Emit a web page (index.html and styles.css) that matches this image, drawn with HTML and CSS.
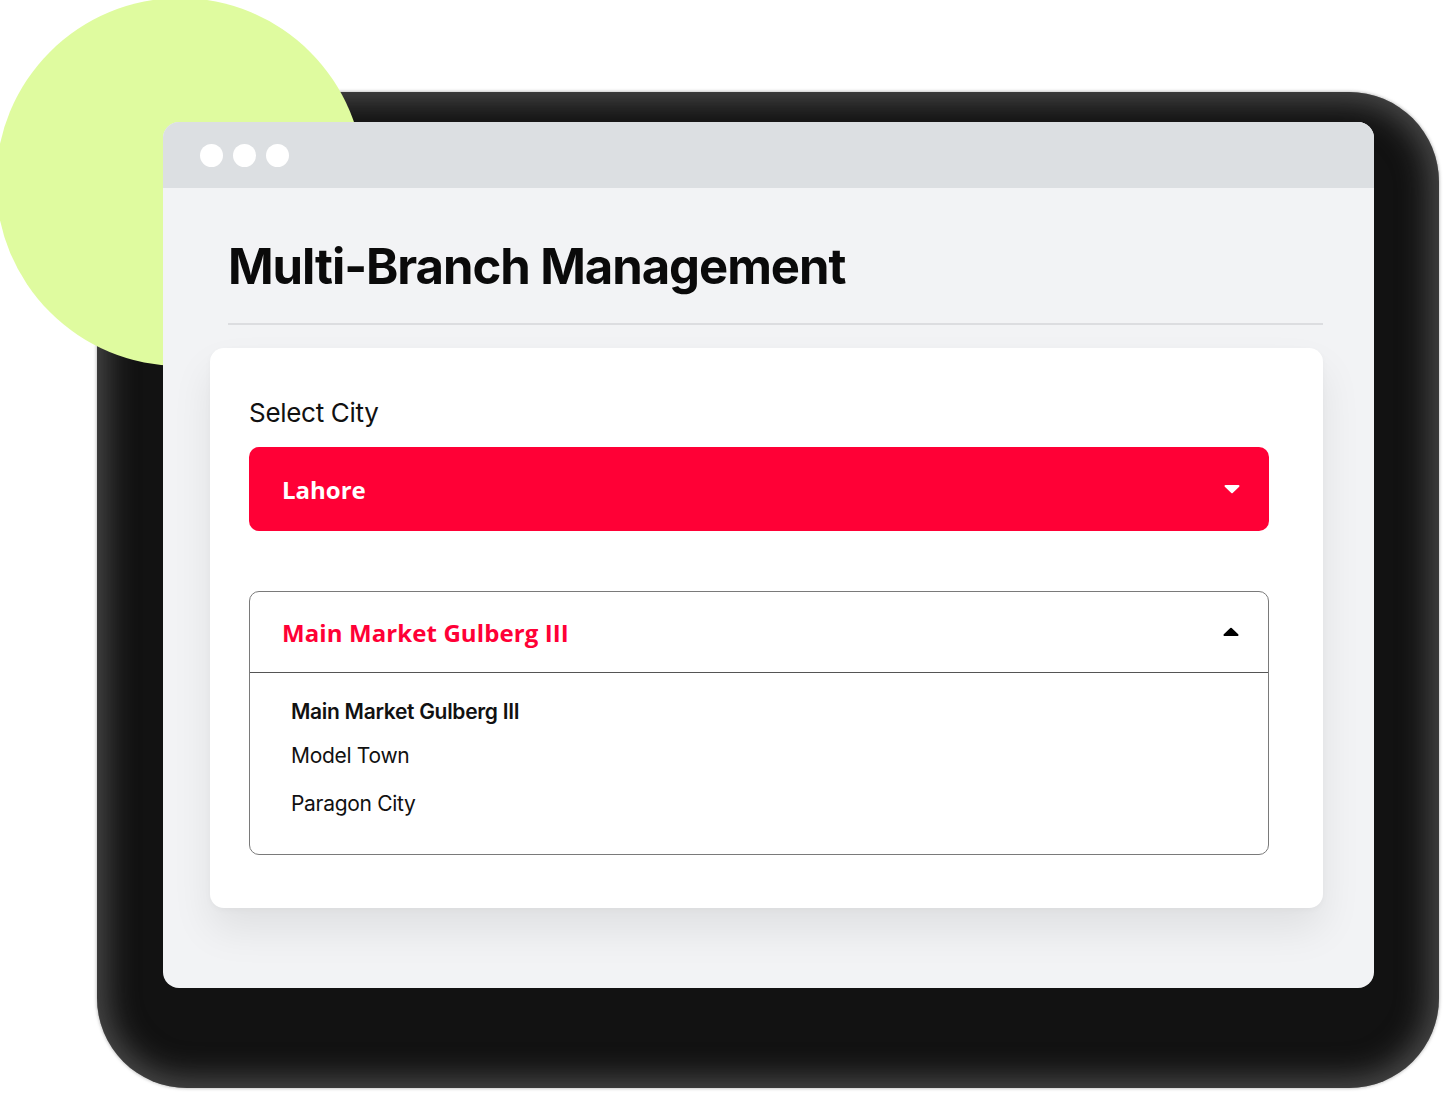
FILE: index.html
```html
<!DOCTYPE html>
<html>
<head>
<meta charset="utf-8">
<link rel="stylesheet" href="styles.css">
</head>
<body>
<div class="stage">
  <div class="halo"></div>
  <div class="blob"></div>
  <div class="window">
    <div class="titlebar">
      <span class="dot"></span><span class="dot"></span><span class="dot"></span>
    </div>
    <div class="content">
      <h1 class="title">Multi-Branch Management</h1>
      <div class="divider"></div>
      <div class="card">
        <div class="label">Select City</div>
        <div class="city-select">
          <span class="city-name">Lahore</span>
          <svg class="caret" width="16" height="10" viewBox="0 0 16 10"><path d="M1.5 1h13a1 1 0 0 1 .7 1.7l-6.5 6.3a1 1 0 0 1-1.4 0L.8 2.7A1 1 0 0 1 1.5 1z" fill="#fff"/></svg>
        </div>
        <div class="branch">
          <div class="branch-head">
            <span class="branch-name">Main Market Gulberg III</span>
            <svg class="caret" width="16" height="10" viewBox="0 0 16 10"><path d="M1.5 9h13a1 1 0 0 0 .7-1.7L8.7 1a1 1 0 0 0-1.4 0L.8 7.3A1 1 0 0 0 1.5 9z" fill="#000"/></svg>
          </div>
          <ul class="options">
            <li class="option active">Main Market Gulberg III</li>
            <li class="option">Model Town</li>
            <li class="option">Paragon City</li>
          </ul>
        </div>
      </div>
    </div>
  </div>
</div>
</body>
</html>
```

FILE: styles.css
```css
* { box-sizing: border-box; }
html, body { margin: 0; padding: 0; background: #fff; }
body { width: 1446px; height: 1096px; overflow: hidden; font-family: Inter, "Noto Sans", sans-serif; }

.stage {
  position: relative;
  width: 1446px;
  height: 1096px;
  padding: 122px 0 0 163px;
}

.halo {
  position: absolute;
  left: 97px;
  top: 92px;
  width: 1342px;
  height: 996px;
  border-radius: 90px;
  background: #121212;
  box-shadow: inset 0 0 30px 10px rgba(130,130,130,0.5), 0 0 3px 1px rgba(120,120,120,0.4);
}

.blob {
  position: absolute;
  left: -4px;
  top: -2px;
  width: 368px;
  height: 368px;
  border-radius: 50%;
  background: #dffb9f;
}

.window {
  position: relative;
  width: 1211px;
  height: 866px;
  border-radius: 16px;
  overflow: hidden;
  background: #f2f3f5;
}

.titlebar {
  height: 66px;
  background: #dcdfe2;
  display: flex;
  align-items: center;
  gap: 10px;
  padding-left: 37px;
}
.dot { width: 23px; height: 23px; border-radius: 50%; background: #fff; }

.content { padding: 0 51px 0 47px; }

.title {
  margin: 0;
  padding: 49px 0 0 18px;
  height: 135px;
  font-family: Inter, sans-serif;
  font-weight: 700;
  font-size: 49px;
  letter-spacing: -1.05px;
  color: #0a0a0a;
  line-height: 60px;
}

.divider {
  height: 2px;
  margin-left: 18px;
  background: #dcdde0;
}

.card {
  margin-top: 23px;
  height: 560px;
  background: #fff;
  border-radius: 14px;
  box-shadow: 0 22px 40px rgba(0,0,0,0.08), 0 2px 6px rgba(0,0,0,0.03);
  padding: 50px 54px 0 39px;
}

.label {
  font-size: 26px;
  line-height: 30px;
  color: #111;
  letter-spacing: -0.3px;
  margin-bottom: 19px;
}

.city-select {
  height: 84px;
  border-radius: 10px;
  background: #ff0036;
  display: flex;
  align-items: center;
  justify-content: space-between;
  padding: 0 29px 0 33px;
}
.city-name {
  font-family: "Open Sans", sans-serif;
  font-weight: 700;
  font-size: 24px;
  color: #fff;
}

.branch {
  margin-top: 60px;
  height: 264px;
  border: 1px solid #7a7a7a;
  border-radius: 10px;
}
.branch-head {
  height: 81px;
  border-bottom: 1px solid #555;
  display: flex;
  align-items: center;
  justify-content: space-between;
  padding: 0 29px 0 32px;
}
.branch-name {
  font-family: "Open Sans", sans-serif;
  font-weight: 700;
  font-size: 24px;
  letter-spacing: 0.1px;
  color: #ff0036;
}

.options {
  list-style: none;
  margin: 0;
  padding: 27px 0 0 41px;
}
.option {
  font-size: 21px;
  line-height: 24px;
  color: #111;
  letter-spacing: -0.3px;
  margin-bottom: 20px;
}
.option:nth-child(2) { margin-bottom: 24px; }
.option.active { font-weight: 600; }
```
